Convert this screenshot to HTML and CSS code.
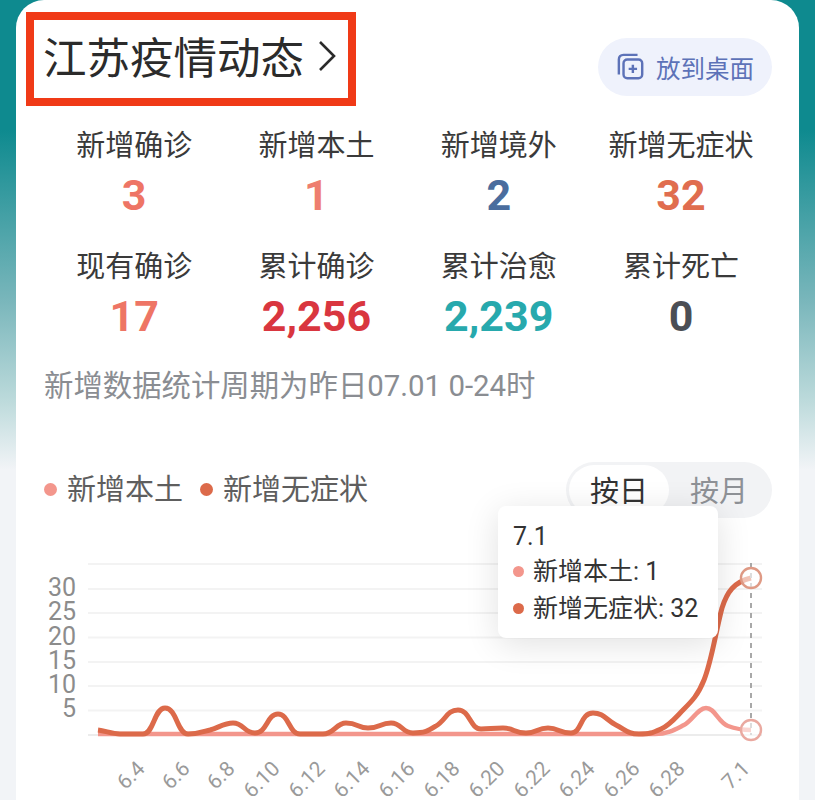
FILE: index.html
```html
<!DOCTYPE html>
<html lang="zh-CN">
  <head>
    <title>江苏疫情动态</title>
    <meta charset="utf-8">
    <link rel="stylesheet" href="styles.css">
  </head>
  <body>

  <div class="card">

    <div class="header">
      <div class="title-box">
        <span class="title">江苏疫情动态</span>
        <svg class="chevron" width="20" height="32" viewBox="0 0 20 32"><path d="M3 2 L17 16 L3 30" fill="none" stroke="#2b2b2b" stroke-width="2.6"/></svg>
      </div>
      <div class="desk-btn">
        <svg width="28" height="28" viewBox="0 0 30 30" fill="none" stroke="#5d72b8" stroke-width="2.6">
          <path d="M2 23 V7 Q2 2 7 2 H22"/>
          <rect x="7" y="7" width="20" height="20" rx="4"/>
          <path d="M17 12.5 V21.5 M12.5 17 H21.5"/>
        </svg>
        <span>放到桌面</span>
      </div>
    </div>

    <div class="stats">
      <div class="stat"><div class="label">新增确诊</div><div class="num c-coral">3</div></div>
      <div class="stat"><div class="label">新增本土</div><div class="num c-salmon">1</div></div>
      <div class="stat"><div class="label">新增境外</div><div class="num c-blue">2</div></div>
      <div class="stat"><div class="label">新增无症状</div><div class="num c-orange">32</div></div>
      <div class="stat"><div class="label">现有确诊</div><div class="num c-coral">17</div></div>
      <div class="stat"><div class="label">累计确诊</div><div class="num c-red">2,256</div></div>
      <div class="stat"><div class="label">累计治愈</div><div class="num c-teal">2,239</div></div>
      <div class="stat"><div class="label">累计死亡</div><div class="num c-dark">0</div></div>
    </div>

    <div class="note">新增数据统计周期为昨日07.01 0-24时</div>

    <div class="chart-head">
      <div class="legend">
        <span class="dot dot-light"></span><span class="legend-text">新增本土</span>
        <span class="dot dot-dark"></span><span class="legend-text">新增无症状</span>
      </div>
      <div class="toggle">
        <span class="tab active">按日</span>
        <span class="tab">按月</span>
      </div>
    </div>

    <div class="chart">
      <svg class="plot" width="783" height="282" viewBox="16 518 783 282">
        <g stroke="#f3f3f3" stroke-width="2">
          <path d="M88 564 H762 M88 589 H762 M88 613 H762 M88 637.500 H762 M88 662 H762 M88 686 H762 M88 710.500 H762"/>
        </g>
        <path d="M88 735 H762" stroke="#ececec" stroke-width="2"/>

        <g class="y-axis">
          <text x="76" y="596">30</text>
          <text x="76" y="620">25</text>
          <text x="76" y="645">20</text>
          <text x="76" y="669">15</text>
          <text x="76" y="693">10</text>
          <text x="76" y="717">5</text>
        </g>

        <g class="x-axis">
          <text transform="translate(146 770) rotate(-45)">6.4</text>
          <text transform="translate(191 770) rotate(-45)">6.6</text>
          <text transform="translate(236 770) rotate(-45)">6.8</text>
          <text transform="translate(281 770) rotate(-45)">6.10</text>
          <text transform="translate(326 770) rotate(-45)">6.12</text>
          <text transform="translate(371 770) rotate(-45)">6.14</text>
          <text transform="translate(416 770) rotate(-45)">6.16</text>
          <text transform="translate(461 770) rotate(-45)">6.18</text>
          <text transform="translate(506 770) rotate(-45)">6.20</text>
          <text transform="translate(551 770) rotate(-45)">6.22</text>
          <text transform="translate(596 770) rotate(-45)">6.24</text>
          <text transform="translate(641 770) rotate(-45)">6.26</text>
          <text transform="translate(686 770) rotate(-45)">6.28</text>
          <text transform="translate(751 770) rotate(-45)">7.1</text>
        </g>

        <!-- 新增本土 -->
        <path d="M98 734 H655 C668 734 676 729 684 725 C692 721 698 708 706 708 C715 708 718 722 728 726 C736 729 742 730 751 730" fill="none" stroke="#f3968c" stroke-width="4.500"/>
        <!-- 新增无症状 -->
        <path d="M98 730 C106 731 112 734 120 734 H143 C154 734 154 708 165 708 C177 708 177 734 188 734 C199 734 205 731 210 730 C218 728 224 723 233 723 C244 723 244 733 255 733 C267 733 267 714 278 714 C289 714 289 734 300 734 H323 C334 734 336 723 346 723 C358 723 358 728 368 728 C380 728 380 723 391 723 C402 723 402 733 413 733 C425 733 428 731 436 726 C446 720 447 710 458 710 C470 710 470 729 481 729 C490 729 492 728 503 728 C514 728 514 733 526 733 C537 733 537 728 548 728 C559 728 559 733 571 733 C582 733 580 713 593 713 C604 713 606 720 616 725 C626 730 628 734 639 734 C650 734 652 733 661 729 C670 725 676 717 684 709 C692 701 698 695 704 680 C712 660 716 630 722 608 C727 592 734 582 751 578" fill="none" stroke="#dc6a4a" stroke-width="5"/>

        <path d="M751 563 V735" stroke="#a8a8a8" stroke-width="2" stroke-dasharray="5 5"/>
        <circle cx="751" cy="578" r="10" fill="#fff" fill-opacity="0.6" stroke="#df9a85" stroke-width="2.400"/>
        <circle cx="751" cy="730" r="10" fill="#fff" fill-opacity="0.6" stroke="#eaa9a0" stroke-width="2.400"/>
      </svg>

      <div class="tooltip">
        <div class="tip-title">7.1</div>
        <div class="tip-row"><span class="tip-dot dot-light"></span>新增本土: 1</div>
        <div class="tip-row"><span class="tip-dot dot-dark"></span>新增无症状: 32</div>
      </div>
    </div>

  </div>

  </body>
</html>
```

FILE: styles.css
```css
html, body {
  margin: 0;
  padding: 0;
  height: 800px;
  overflow: hidden;
}

body {
  background: linear-gradient(#0e8a8f 0, #0e8a8f 130px, #79b6bb 300px, #bcdadb 400px, #f2f4f7 470px);
  font-family: "Noto Sans CJK SC", Roboto, sans-serif;
  color: #333;
}

.card {
  margin-left: 16px;
  width: 783px;
  height: 800px;
  background: #fff;
  border-radius: 28px 28px 0 0;
}

.header {
  display: flex;
  justify-content: space-between;
  align-items: flex-start;
  padding: 12px 27px 0 10px;
  height: 94px;
}

.title-box {
  display: flex;
  align-items: center;
  gap: 13px;
  box-sizing: border-box;
  width: 330px;
  height: 94px;
  padding: 0 0 6px 9px;
  border: 8px solid #f03a17;
}

.title {
  font-size: 43.500px;
  line-height: 72px;
  white-space: nowrap;
  color: #2b2b2b;
}

.desk-btn {
  display: flex;
  align-items: center;
  gap: 11px;
  box-sizing: border-box;
  width: 174px;
  height: 58px;
  margin-top: 26px;
  padding-left: 19px;
  border-radius: 29px;
  background: #eff2fc;
  color: #5d72b8;
  font-size: 24.500px;
}

.stats {
  display: grid;
  grid-template-columns: repeat(4, 182.300px);
  grid-auto-rows: 121px;
  margin: 16px 0 0 27px;
}

.stat {
  text-align: center;
}

.label {
  font-size: 29px;
  line-height: 42px;
  color: #3a3a3a;
  white-space: nowrap;
}

.num {
  margin-top: 4px;
  font-family: Roboto, sans-serif;
  font-weight: 700;
  font-size: 43px;
  line-height: 54px;
}

.c-coral { color: #ee7565; }
.c-salmon { color: #ee7e6e; }
.c-blue { color: #4a6d9e; }
.c-orange { color: #e06d4f; }
.c-red { color: #d9363f; }
.c-teal { color: #27a9ad; }
.c-dark { color: #4b4e55; }

.note {
  margin: 1px 0 0 28px;
  font-size: 29.400px;
  line-height: 42px;
  color: #8a8d92;
  font-family: Roboto, "Noto Sans CJK SC", sans-serif;
}

.chart-head {
  display: flex;
  justify-content: space-between;
  align-items: center;
  margin-top: 55px;
  padding: 0 27px 0 28px;
  height: 56px;
}

.legend {
  display: flex;
  align-items: center;
  padding-bottom: 6px;
  font-size: 29px;
  color: #5e5e5e;
}

.legend-text {
  margin-right: 17px;
}

.dot {
  width: 13px;
  height: 13px;
  margin: 4px 10px 0 0;
  border-radius: 50%;
}

.dot-light { background: #f3968c; }
.dot-dark { background: #dc6a4a; }

.toggle {
  display: flex;
  box-sizing: border-box;
  width: 206px;
  height: 56px;
  padding: 3px;
  border-radius: 28px;
  background: #f2f3f5;
}

.tab {
  width: 100px;
  line-height: 48px;
  border-radius: 25px;
  text-align: center;
  font-size: 29px;
  color: #8e9196;
}

.tab.active {
  background: #fff;
  color: #333;
}

.chart {
  position: relative;
}

.plot {
  display: block;
}

.y-axis text {
  font-family: Roboto, sans-serif;
  font-size: 25px;
  fill: #8c8c8c;
  text-anchor: end;
}

.x-axis text {
  font-family: Roboto, sans-serif;
  font-size: 21px;
  fill: #9a9a9a;
  text-anchor: end;
}

.tooltip {
  position: absolute;
  left: 482px;
  top: -12px;
  box-sizing: border-box;
  width: 220px;
  height: 132px;
  padding: 14px 15px;
  border-radius: 8px;
  background: #fff;
  box-shadow: 0 6px 34px rgba(0, 0, 0, 0.12);
  font-size: 25px;
  font-family: Roboto, "Noto Sans CJK SC", sans-serif;
  color: #333;
}

.tip-title {
  line-height: 33px;
}

.tip-row {
  display: flex;
  align-items: center;
  line-height: 37px;
  white-space: pre;
}

.tip-dot {
  width: 11px;
  height: 11px;
  margin-right: 9px;
  border-radius: 50%;
}
```
